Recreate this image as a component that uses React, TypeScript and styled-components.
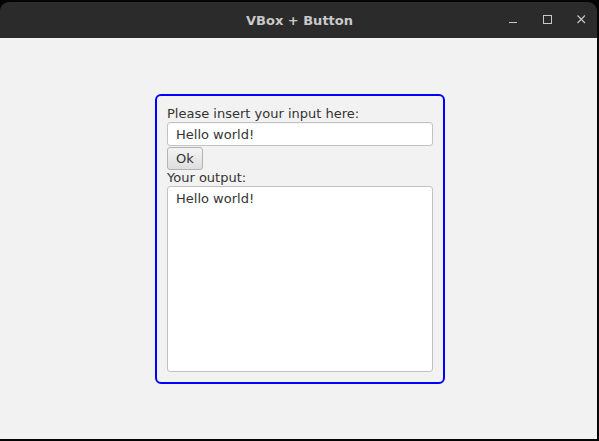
import { FC } from "react";
import styled, { createGlobalStyle } from "styled-components";

const GlobalStyle = createGlobalStyle`
  html, body {
    margin: 0;
    padding: 0;
    background: #000;
  }
  #root {
    width: 599px;
    height: 441px;
  }
`;

const Screen = styled.div`
  width: 599px;
  height: 441px;
  box-sizing: border-box;
  padding: 2px 2px 2px 0;
  background: #050505;
  display: flex;
`;

const Window = styled.div`
  flex: 1;
  display: flex;
  flex-direction: column;
  border-radius: 9px 9px 0 0;
  overflow: hidden;
`;

const TitleBar = styled.div`
  height: 36px;
  flex: none;
  background: #2b2b2b;
  display: grid;
  grid-template-columns: 1fr auto 1fr;
  align-items: center;
`;

const Title = styled.div`
  grid-column: 2;
  font-family: "DejaVu Sans", sans-serif;
  font-weight: bold;
  font-size: 13px;
  color: #c9c9c9;
  padding-left: 2px;
`;

const Controls = styled.div`
  grid-column: 3;
  justify-self: end;
  display: flex;
  align-items: center;
  gap: 24px;
  padding-right: 11px;
  padding-bottom: 2px;
  height: 100%;
  box-sizing: border-box;
`;

const ControlButton = styled.div`
  width: 10px;
  height: 10px;
  svg {
    display: block;
  }
`;

const Content = styled.div`
  flex: 1;
  background: #f2f2f2;
  display: flex;
  justify-content: center;
  align-items: flex-start;
  padding-top: 56px;
  padding-left: 3px;
`;

const VBox = styled.div`
  width: 290px;
  box-sizing: border-box;
  border: 2px solid #0000ff;
  border-radius: 6px;
  padding: 10px;
  display: flex;
  flex-direction: column;
`;

const Label = styled.div`
  height: 16px;
  line-height: 16px;
  font-family: "DejaVu Sans", sans-serif;
  font-size: 13px;
  color: #333333;
  white-space: nowrap;
`;

const TextField = styled.div`
  height: 24px;
  box-sizing: border-box;
  border: 1px solid #c2c2c2;
  border-radius: 3px;
  background: #fff;
  box-shadow: inset 0 1px 1px rgba(0, 0, 0, 0.04);
  padding: 0 8px;
  display: flex;
  align-items: center;
  font-family: "DejaVu Sans", sans-serif;
  font-size: 13px;
  color: #333333;
`;

const Button = styled.div`
  margin-top: 1px;
  width: 36px;
  height: 23px;
  box-sizing: border-box;
  border: 1px solid #b3b3b3;
  border-radius: 3px;
  background: linear-gradient(#f4f4f4, #dedede);
  display: flex;
  align-items: center;
  justify-content: center;
  font-family: "DejaVu Sans", sans-serif;
  font-size: 13px;
  color: #333333;
`;

const TextArea = styled.div`
  height: 186px;
  box-sizing: border-box;
  border: 1px solid #c2c2c2;
  border-radius: 3px;
  background: #fff;
  padding: 4px 8px;
  line-height: 16px;
  font-family: "DejaVu Sans", sans-serif;
  font-size: 13px;
  color: #333333;
`;

const App: FC = () => (
  <>
    <GlobalStyle />
    <Screen>
      <Window>
        <TitleBar>
          <Title>VBox + Button</Title>
          <Controls>
            <ControlButton>
              <svg width="10" height="10" viewBox="0 0 10 10">
                <path d="M1 8.5h8" stroke="#c8c8c8" strokeWidth="1" />
              </svg>
            </ControlButton>
            <ControlButton>
              <svg width="10" height="10" viewBox="0 0 10 10">
                <rect x="1.5" y="1.5" width="8" height="8" fill="none" stroke="#c8c8c8" strokeWidth="1" />
              </svg>
            </ControlButton>
            <ControlButton>
              <svg width="10" height="10" viewBox="0 0 10 10">
                <path d="M1.5 1.5l7.5 7.5M9 1.5l-7.5 7.5" stroke="#c8c8c8" strokeWidth="1.1" />
              </svg>
            </ControlButton>
          </Controls>
        </TitleBar>
        <Content>
          <VBox>
            <Label>Please insert your input here:</Label>
            <TextField>Hello world!</TextField>
            <Button>Ok</Button>
            <Label>Your output:</Label>
            <TextArea>Hello world!</TextArea>
          </VBox>
        </Content>
      </Window>
    </Screen>
  </>
);

export default App;
